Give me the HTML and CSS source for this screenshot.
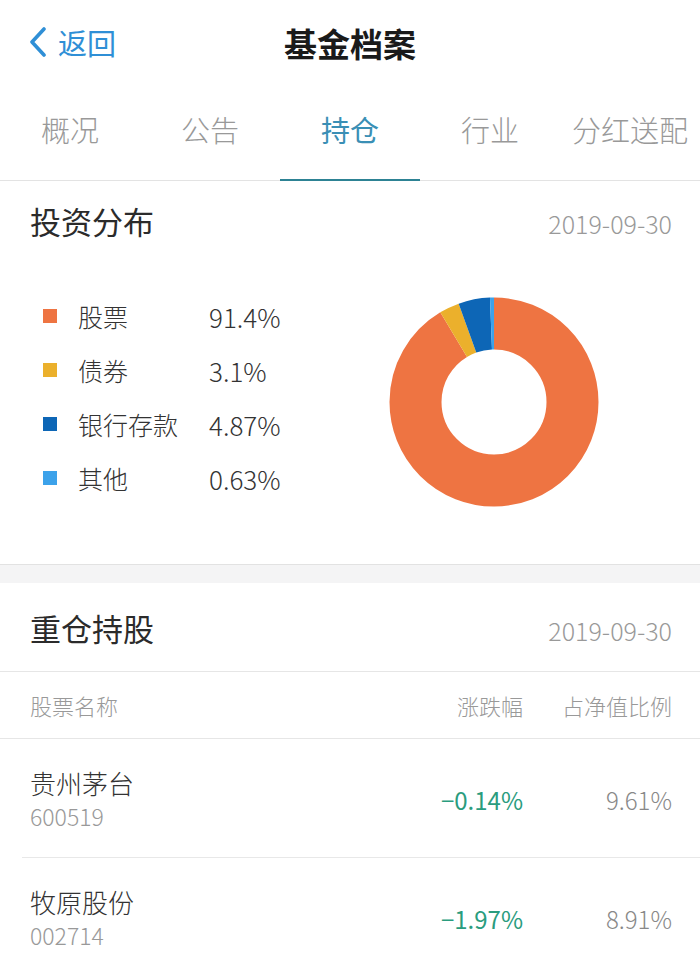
FILE: index.html
```html
<!DOCTYPE html>
<html lang="zh-CN">
<head>
<meta charset="utf-8">
<title>基金档案</title>
<link rel="stylesheet" href="styles.css">
</head>
<body>
<div class="page">
  <header class="navbar">
    <div class="back">
      <svg class="chev" width="20" height="30" viewBox="0 0 20 30"><path d="M16 2 L4 15 L16 28" fill="none" stroke="#2f8fd6" stroke-width="3.6" stroke-linecap="round" stroke-linejoin="round"/></svg>
      <span>返回</span>
    </div>
    <h1 class="title">基金档案</h1>
  </header>
  <nav class="tabs">
    <div class="tab">概况</div>
    <div class="tab">公告</div>
    <div class="tab active">持仓</div>
    <div class="tab">行业</div>
    <div class="tab">分红送配</div>
  </nav>

  <section class="card dist">
    <div class="sec-head">
      <h2>投资分布</h2>
      <span class="date">2019-09-30</span>
    </div>
    <div class="dist-body">
      <ul class="legend">
        <li><i class="sw c1"></i><span class="lab">股票</span><span class="val">91.4%</span></li>
        <li><i class="sw c2"></i><span class="lab">债券</span><span class="val">3.1%</span></li>
        <li><i class="sw c3"></i><span class="lab">银行存款</span><span class="val">4.87%</span></li>
        <li><i class="sw c4"></i><span class="lab">其他</span><span class="val">0.63%</span></li>
      </ul>
      <svg class="donut" width="210" height="210" viewBox="0 0 210 210">
        <g transform="rotate(-90 105 105)">
          <circle cx="105" cy="105" r="78.5" fill="none" stroke="#ee7442" stroke-width="52" pathLength="100" stroke-dasharray="91.4 100" stroke-dashoffset="0"/>
          <circle cx="105" cy="105" r="78.5" fill="none" stroke="#ebb02c" stroke-width="52" pathLength="100" stroke-dasharray="3.1 100" stroke-dashoffset="-91.4"/>
          <circle cx="105" cy="105" r="78.5" fill="none" stroke="#0d66b6" stroke-width="52" pathLength="100" stroke-dasharray="4.87 100" stroke-dashoffset="-94.5"/>
          <circle cx="105" cy="105" r="78.5" fill="none" stroke="#3ca2ea" stroke-width="52" pathLength="100" stroke-dasharray="0.63 100" stroke-dashoffset="-99.37"/>
        </g>
      </svg>
    </div>
  </section>

  <div class="gap"></div>

  <section class="card holdings">
    <div class="sec-head head2">
      <h2>重仓持股</h2>
      <span class="date">2019-09-30</span>
    </div>
    <div class="cols">
      <span class="c-name">股票名称</span>
      <span class="c-chg">涨跌幅</span>
      <span class="c-pct">占净值比例</span>
    </div>
    <div class="row">
      <div class="c-name">
        <div class="sname">贵州茅台</div>
        <div class="code">600519</div>
      </div>
      <span class="c-chg down">−0.14%</span>
      <span class="c-pct pct">9.61%</span>
    </div>
    <div class="row">
      <div class="c-name">
        <div class="sname">牧原股份</div>
        <div class="code">002714</div>
      </div>
      <span class="c-chg down">−1.97%</span>
      <span class="c-pct pct">8.91%</span>
    </div>
  </section>
</div>
</body>
</html>
```

FILE: styles.css
```css
* { box-sizing: border-box; }
html, body { margin: 0; padding: 0; background: #fff; }
body {
  font-family: "Noto Sans CJK SC", "Noto Sans", sans-serif;
  color: #333;
  font-weight: 300;
}
.page { width: 700px; overflow: hidden; }

.navbar {
  height: 84px;
  display: flex;
  align-items: center;
  justify-content: center;
  position: relative;
}
.back {
  position: absolute;
  left: 28px;
  top: 24px;
  display: flex;
  align-items: center;
  gap: 10px;
  color: #2f8fd6;
  font-size: 29px;
  line-height: 36px;
  font-weight: 400;
}
.title {
  margin: 0;
  font-size: 33px;
  font-weight: 700;
  color: #1a1a1a;
  line-height: 40px;
  position: relative;
  top: 1px;
}

.tabs {
  display: flex;
  height: 97px;
  border-bottom: 1px solid #e3e3e3;
}
.tab {
  flex: 1;
  display: flex;
  align-items: center;
  justify-content: center;
  font-size: 29px;
  color: #999;
  padding-bottom: 6px;
}
.tab.active {
  color: #3a8fb5;
  border-bottom: 2px solid #2d8294;
  margin-bottom: -1px;
  font-weight: 400;
}

.card { background: #fff; }
.sec-head {
  display: flex;
  justify-content: space-between;
  align-items: center;
  height: 84px;
  padding: 0 28px 0 30px;
}
.sec-head h2 {
  margin: 0;
  font-size: 31px;
  font-weight: 400;
  color: #2b2b2b;
}
.dist .sec-head { padding-bottom: 6px; }
.date { font-size: 25px; color: #999; padding-top: 6px; }

.dist { height: 384px; border-bottom: 1px solid #e2e2e2; }
.dist-body {
  display: flex;
  justify-content: space-between;
  padding: 24px 101px 0 43px;
}
.legend { list-style: none; margin: 0; padding: 0; }
.legend li {
  height: 54px;
  display: flex;
  align-items: center;
}
.sw { width: 14px; height: 14px; display: block; margin-right: 21px; }
.c1 { background: #ee7442; }
.c2 { background: #ebb02c; }
.c3 { background: #0d66b6; }
.c4 { background: #3ca2ea; }
.lab { width: 131px; font-size: 25px; color: #333; }
.val { font-size: 26px; color: #333; }
.donut { margin-top: 8px; }

.gap { height: 18px; background: #f4f4f5; }

.head2 { height: 89px; border-bottom: 1px solid #e6e6e6; }
.cols, .row {
  display: flex;
  align-items: center;
  padding: 0 28px 0 30px;
}
.cols {
  height: 67px;
  border-bottom: 1px solid #e6e6e6;
  font-size: 22px;
  color: #999;
}
.c-name { flex: 1; }
.c-chg { width: 120px; text-align: right; }
.c-pct { width: 149px; text-align: right; }
.row {
  height: 119px;
  border-bottom: 1px solid #e8e8e8;
  margin-left: 22px;
  padding-left: 8px;
}
.sname { font-size: 26px; color: #333; line-height: 34px; }
.code { font-size: 23px; color: #999; line-height: 30px; margin-top: 1px; }
.down { font-size: 24px; color: #2a9c7e; padding-top: 2px; font-weight: 400; }
.pct { font-size: 24px; color: #888; padding-top: 2px; }
```
